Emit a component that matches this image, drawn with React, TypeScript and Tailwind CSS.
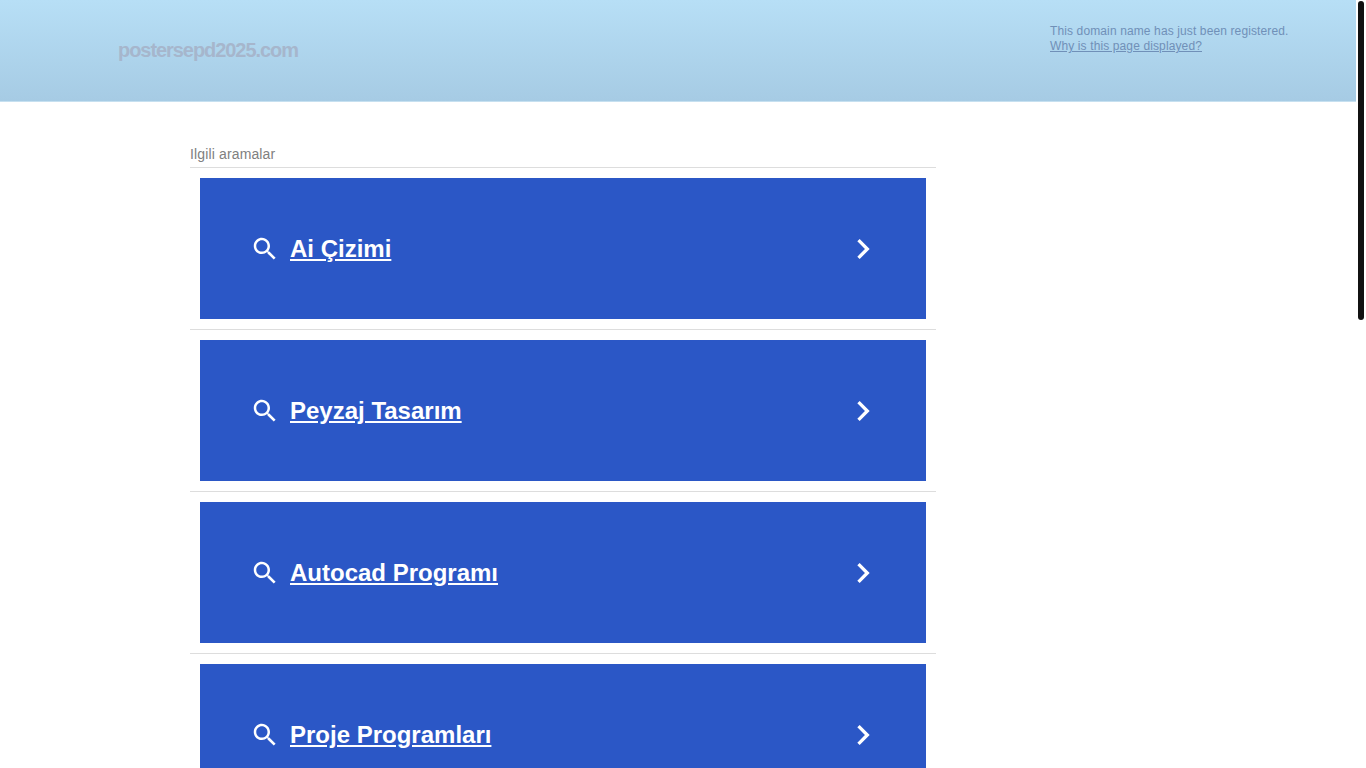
const terms = ['Ai Çizimi', 'Peyzaj Tasarım', 'Autocad Programı', 'Proje Programları'];

function SearchIcon() {
  return (
    <svg viewBox="0 0 24 24" className="w-[30px] h-[30px] shrink-0 fill-white">
      <path d="M15.5 14h-.79l-.28-.27C15.41 12.59 16 11.11 16 9.5 16 5.91 13.09 3 9.5 3S3 5.91 3 9.5 5.91 16 9.5 16c1.61 0 3.09-.59 4.23-1.57l.27.28v.79l5 4.99L20.49 19l-4.99-5zm-6 0C7.01 14 5 11.99 5 9.5S7.01 5 9.5 5 14 7.01 14 9.5 11.99 14 9.5 14z" />
    </svg>
  );
}

function ChevronIcon() {
  return (
    <svg viewBox="0 0 24 24" className="w-[40px] h-[40px] shrink-0 fill-white">
      <path d="M10 6L8.59 7.41 13.17 12l-4.58 4.59L10 18l6-6z" />
    </svg>
  );
}

export default function App() {
  return (
    <div className="flex h-screen overflow-hidden bg-white font-['Liberation_Sans',Arial,sans-serif]">
      <div className="flex-1 min-w-0">
        {/* Header */}
        <div className="h-[102px] flex justify-between border-b border-[#c6e0f0] bg-gradient-to-b from-[#b7dff6] to-[#a6cbe4]">
          <div className="pl-[118px] pt-[38px] text-[20px] leading-[24px] font-bold tracking-[-1.06px] text-[#a6b6cc]">
            postersepd2025.com
          </div>
          <div className="w-[306px] pt-[24px] text-[12px] leading-[15px] tracking-[0.12px] text-[#7090b8]">
            <div>This domain name has just been registered.</div>
            <a href="#" className="underline">Why is this page displayed?</a>
          </div>
        </div>

        {/* Related searches */}
        <div className="ml-[190px] w-[746px] mt-[44px]">
          <div className="h-[22px] text-[14px] leading-[17px] tracking-[0.14px] text-[#808080] border-b border-[#dddddd]">
            Ilgili aramalar
          </div>
          {terms.map((term) => (
            <div key={term} className="p-[10px] border-b border-[#dddddd]">
              <div className="h-[141px] bg-[#2b57c6] flex items-center pl-[50px] pr-[43px]">
                <SearchIcon />
                <a href="#" className="ml-[10px] flex-1 text-[24px] leading-[28px] font-bold text-white underline">
                  {term}
                </a>
                <ChevronIcon />
              </div>
            </div>
          ))}
        </div>
      </div>

      {/* Scrollbar */}
      <div className="w-[10px] shrink-0 pt-[1px] px-[2px]">
        <div className="h-[319px] rounded-[3px] bg-[#111111]"></div>
      </div>
    </div>
  );
}
